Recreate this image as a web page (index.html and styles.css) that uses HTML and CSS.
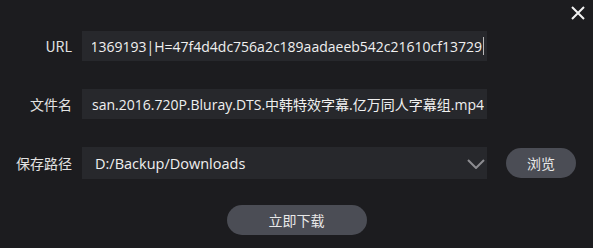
FILE: index.html
```html
<!DOCTYPE html>
<html lang="zh-CN">
<head>
<meta charset="utf-8">
<title>下载</title>
<link rel="stylesheet" href="styles.css">
</head>
<body>
<div class="dialog">
  <button class="close" aria-label="关闭">
    <svg width="14" height="14" viewBox="0 0 14 14"><path d="M1 1 L13 13 M13 1 L1 13" stroke="#f2f2f2" stroke-width="2" fill="none"/></svg>
  </button>
  <div class="form">
    <label class="label">URL</label>
    <div class="field"><div class="clip"><span class="text">1369193|H=47f4d4dc756a2c189aadaeeb542c21610cf13729</span><span class="caret"></span></div></div>
    <span></span>

    <label class="label">文件名</label>
    <div class="field"><div class="clip"><span class="text">usan.2016.720P.Bluray.DTS.中韩特效字幕.亿万同人字幕组.mp4</span></div></div>
    <span></span>

    <label class="label">保存路径</label>
    <div class="field select"><span class="path">D:/Backup/Downloads</span>
      <svg class="chev" width="18" height="10" viewBox="0 0 18 10"><path d="M1 1 L9 9 L17 1" stroke="#8c8c90" stroke-width="2" fill="none"/></svg>
    </div>
    <button class="btn browse">浏览</button>
  </div>
  <div class="actions">
    <button class="btn download">立即下载</button>
  </div>
</div>
</body>
</html>
```
FILE: styles.css
```css
html, body {
  margin: 0;
  padding: 0;
  background: #1c1c1f;
}
body {
  width: 593px;
  height: 248px;
  overflow: hidden;
  font-family: "Open Sans", "Noto Sans CJK SC", sans-serif;
  color: #e6e6e6;
}
.dialog {
  position: relative;
  height: 248px;
  padding-top: 31px;
  box-sizing: border-box;
}
.close {
  position: absolute;
  top: 5px;
  right: 7px;
  width: 16px;
  height: 16px;
  padding: 0;
  border: 0;
  background: none;
  display: flex;
  align-items: center;
  justify-content: center;
}
.form {
  display: grid;
  grid-template-columns: 72px 405px 70px;
  column-gap: 10px;
  row-gap: 28px;
  align-items: center;
}
.form > :nth-child(3n) {
  margin-left: 9px;
}
.label {
  text-align: right;
  font-size: 14px;
  color: #e2e2e2;
  font-family: "Noto Sans CJK SC", "Open Sans", sans-serif;
}
.field {
  height: 30px;
  background: #27282c;
  display: flex;
  align-items: center;
  padding: 0 3px 0 10px;
  box-sizing: border-box;
}
.clip {
  flex: 1;
  min-width: 0;
  overflow: hidden;
  display: flex;
  justify-content: flex-end;
  align-items: center;
  white-space: nowrap;
}
.text {
  font-size: 14px;
  color: #f0f0f0;
  flex: none;
}
.caret {
  flex: none;
  width: 1px;
  height: 18px;
  margin-left: 1px;
  background: #b8b8b8;
}
.select {
  height: 32px;
  padding: 0 2px 0 13px;
  justify-content: space-between;
}
.path {
  font-size: 14.5px;
  color: #f0f0f0;
}
.chev {
  display: block;
  margin-top: 1px;
}
.btn {
  border: 0;
  border-radius: 15px;
  background: #4b4d55;
  color: #e8e8e8;
  font-family: "Noto Sans CJK SC", sans-serif;
  font-size: 14px;
  height: 30px;
  padding: 0;
}
.browse {
  width: 70px;
}
.actions {
  display: flex;
  justify-content: center;
  margin-top: 26px;
}
.download {
  width: 140px;
}
```
